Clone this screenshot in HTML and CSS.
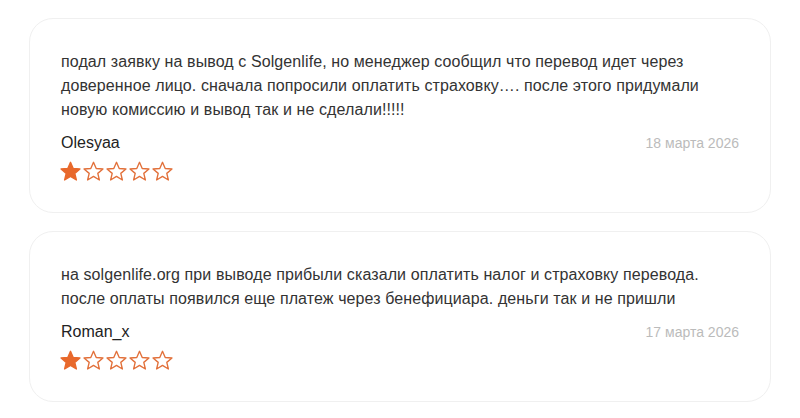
FILE: index.html
```html
<!DOCTYPE html>
<html lang="ru">
<head>
    <meta charset="UTF-8">
    <meta name="viewport" content="width=device-width, initial-scale=1.0">
    <title>Отзывы</title>
    <link rel="stylesheet" href="styles.css">
</head>
<body>
    <svg width="0" height="0" class="defs">
        <defs>
            <path id="star" d="M10 1.2 L12.6 7.1 L19 7.6 L14.1 11.8 L15.6 18.1 L10 14.7 L4.4 18.1 L5.9 11.8 L1 7.6 L7.4 7.1 Z"/>
        </defs>
    </svg>
    <div class="reviews">
        <div class="review">
            <p class="review-text">подал заявку на вывод с Solgenlife, но менеджер сообщил что перевод идет через доверенное лицо. сначала попросили оплатить страховку…. после этого придумали новую комиссию и вывод так и не сделали!!!!!</p>
            <div class="review-meta">
                <span class="author">Olesyaa</span>
                <span class="date">18 марта 2026</span>
            </div>
            <div class="stars">
                <svg class="star full" viewBox="0 0 20 20"><use href="#star"/></svg>
                <svg class="star" viewBox="0 0 20 20"><use href="#star"/></svg>
                <svg class="star" viewBox="0 0 20 20"><use href="#star"/></svg>
                <svg class="star" viewBox="0 0 20 20"><use href="#star"/></svg>
                <svg class="star" viewBox="0 0 20 20"><use href="#star"/></svg>
            </div>
        </div>
        <div class="review">
            <p class="review-text">на solgenlife.org при выводе прибыли сказали оплатить налог и страховку перевода. после оплаты появился еще платеж через бенефициара. деньги так и не пришли</p>
            <div class="review-meta">
                <span class="author">Roman_x</span>
                <span class="date">17 марта 2026</span>
            </div>
            <div class="stars">
                <svg class="star full" viewBox="0 0 20 20"><use href="#star"/></svg>
                <svg class="star" viewBox="0 0 20 20"><use href="#star"/></svg>
                <svg class="star" viewBox="0 0 20 20"><use href="#star"/></svg>
                <svg class="star" viewBox="0 0 20 20"><use href="#star"/></svg>
                <svg class="star" viewBox="0 0 20 20"><use href="#star"/></svg>
            </div>
        </div>
    </div>
</body>
</html>
```

FILE: styles.css
```css
* { margin: 0; padding: 0; box-sizing: border-box; }
body { font-family: "Liberation Sans", Arial, sans-serif; background: #fff; color: #333; }
.defs { position: absolute; }
.reviews { display: flex; flex-direction: column; gap: 18px; padding: 18px 29px; }
.review { border: 1px solid #f0f0f0; border-radius: 24px; padding: 31px 31px 30px; background: #fff; }
.review-text { font-size: 16px; line-height: 24px; letter-spacing: 0.1px; color: #333; }
.review-meta { display: flex; justify-content: space-between; align-items: baseline; margin-top: 10px; }
.author { font-size: 16px; line-height: 22px; color: #222; }
.date { font-size: 14px; color: #bbb; }
.stars { display: flex; gap: 2px; margin-top: 7px; margin-left: -1px; }
.star { width: 21px; height: 21px; fill: none; stroke: #e2703a; stroke-width: 1.3; stroke-linejoin: round; }
.star.full { fill: #e8692c; stroke: #e8692c; }
```
